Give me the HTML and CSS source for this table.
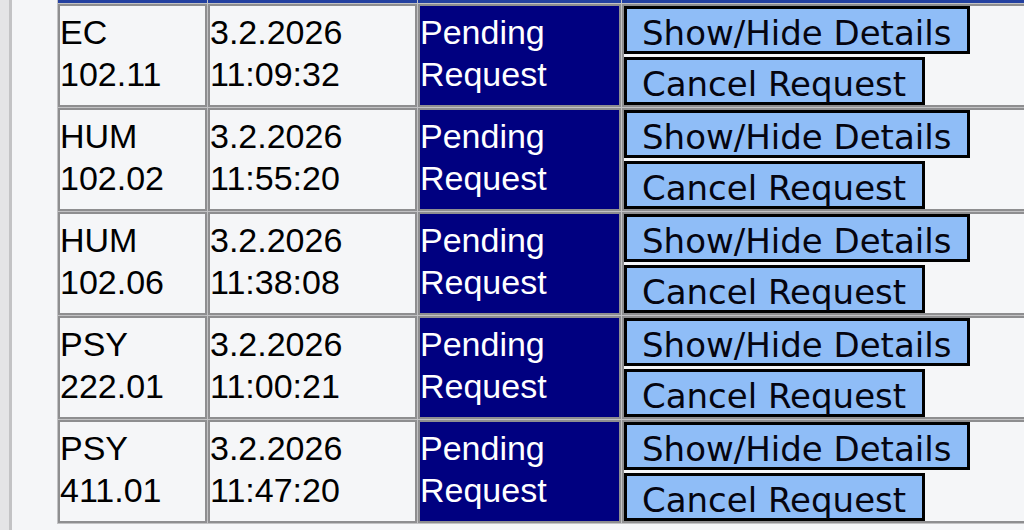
FILE: index.html
```html
<!DOCTYPE html>
<html lang="en">
<head>
<meta charset="utf-8">
<title>Requests</title>
<link rel="stylesheet" href="styles.css">
</head>
<body>
<div class="page">
  <div class="rail"></div>
  <div class="content">
    <table class="requests">
      <thead>
        <tr><th class="course"></th><th class="date"></th><th class="status-h"></th><th></th></tr>
      </thead>
      <tbody>
        <tr>
          <td class="course">EC 102.11</td>
          <td class="date">3.2.2026 11:09:32</td>
          <td class="status">Pending Request</td>
          <td class="actions"><div class="btns"><button class="btn">Show/Hide Details</button><button class="btn">Cancel Request</button></div></td>
        </tr>
        <tr>
          <td class="course">HUM 102.02</td>
          <td class="date">3.2.2026 11:55:20</td>
          <td class="status">Pending Request</td>
          <td class="actions"><div class="btns"><button class="btn">Show/Hide Details</button><button class="btn">Cancel Request</button></div></td>
        </tr>
        <tr>
          <td class="course">HUM 102.06</td>
          <td class="date">3.2.2026 11:38:08</td>
          <td class="status">Pending Request</td>
          <td class="actions"><div class="btns"><button class="btn">Show/Hide Details</button><button class="btn">Cancel Request</button></div></td>
        </tr>
        <tr>
          <td class="course">PSY 222.01</td>
          <td class="date">3.2.2026 11:00:21</td>
          <td class="status">Pending Request</td>
          <td class="actions"><div class="btns"><button class="btn">Show/Hide Details</button><button class="btn">Cancel Request</button></div></td>
        </tr>
        <tr>
          <td class="course">PSY 411.01</td>
          <td class="date">3.2.2026 11:47:20</td>
          <td class="status">Pending Request</td>
          <td class="actions"><div class="btns"><button class="btn">Show/Hide Details</button><button class="btn">Cancel Request</button></div></td>
        </tr>
      </tbody>
    </table>
  </div>
</div>
</body>
</html>
```
FILE: styles.css
```css
html, body {
  margin: 0;
  padding: 0;
  height: 100%;
  overflow: hidden;
}

body {
  background: #e6e6e8;
  font-family: "Liberation Sans", Arial, sans-serif;
}

.page {
  display: flex;
  height: 530px;
}

.rail {
  flex: none;
  width: 9px;
  background: #e4e4e6;
  border-right: 3px solid #c3c3c5;
}

.content {
  flex: 1;
  padding-left: 45px;
  overflow: hidden;
  background: #f5f6f8;
}

.requests {
  border-collapse: separate;
  border-spacing: 1px;
  background: #c2c2c4;
  margin-top: -1px;
  width: 1100px;
}

.requests th {
  height: 3px;
  padding: 0;
  border: 0;
  background: #2340a0;
}

.requests td {
  border: 2px solid #8e8e90;
  padding: 0 0 5px;
  background: #f5f6f8;
  color: #000;
  font-size: 34px;
  line-height: 42px;
  vertical-align: middle;
  text-align: left;
}

.requests .course {
  width: 145px;
}

.requests .date {
  width: 205px;
}

.requests .status,
.requests .status-h {
  width: 199px;
}

.requests td.status {
  background: #000080;
  color: #fff;
}

.requests td.actions {
  vertical-align: top;
  padding: 0;
}

.btns {
  display: flex;
  flex-direction: column;
  align-items: flex-start;
  gap: 3px;
}

.btn {
  box-sizing: border-box;
  height: 48px;
  margin: 0;
  padding: 6px 16px 0 15px;
  border: 3px solid #000;
  border-radius: 0;
  background: #8fbdf7;
  color: #050510;
  font-family: "DejaVu Sans", Verdana, sans-serif;
  font-size: 34px;
  line-height: 36px;
  white-space: nowrap;
}
```
